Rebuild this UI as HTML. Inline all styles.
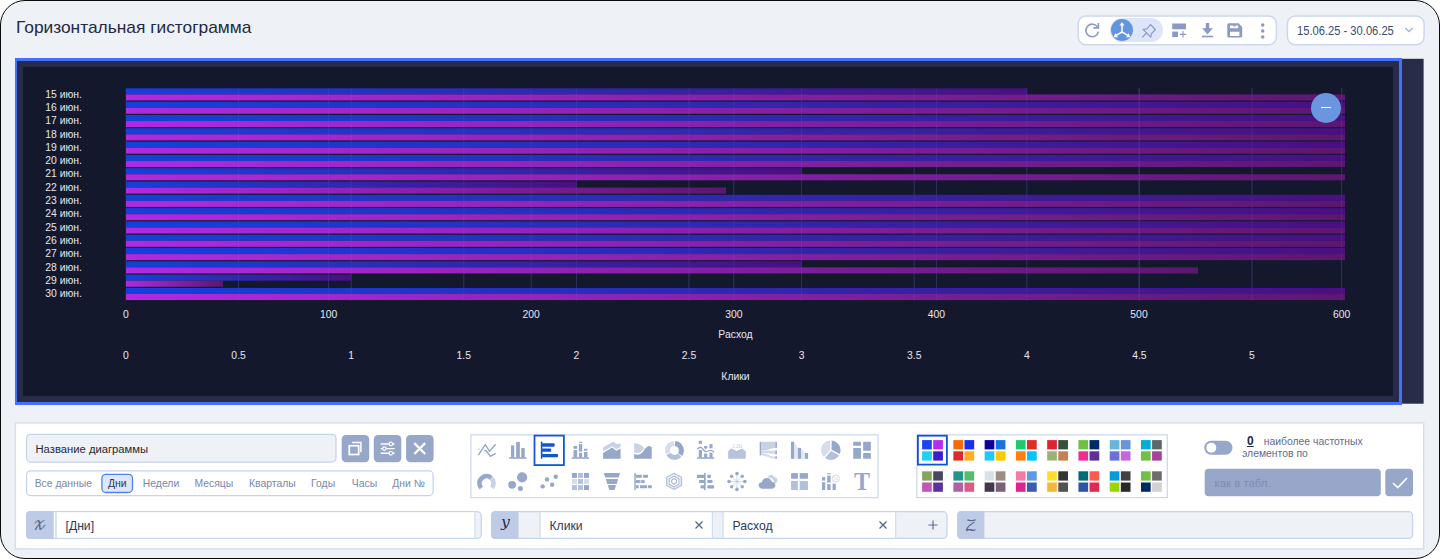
<!DOCTYPE html>
<html lang="ru">
<head>
<meta charset="utf-8">
<title>Горизонтальная гистограмма</title>
<style>
html,body{margin:0;padding:0;background:#fff;}
body{width:1440px;height:559px;position:relative;overflow:hidden;font-family:"Liberation Sans",Arial,sans-serif;color:#1f2a44;}
*{box-sizing:border-box;}
.abs,.frame,.ic,.pal i,.tg span{position:absolute;}
.frame{left:0;top:0;width:1440px;height:559px;background:#eef1f6;border:1px solid #0a0a0a;border-radius:25px;}
.title{left:16px;top:15px;font-size:17.35px;line-height:24px;color:#1f2a44;white-space:nowrap;}
.tbar{left:1077.5px;top:15.5px;width:199px;height:29px;background:#fff;border:1px solid #c6d3ec;border-radius:8px;}
.pill{left:1110px;top:18.3px;width:52.8px;height:24px;border-radius:12px;background:#dce6f8;}
.circ{left:1110.6px;top:18.9px;width:22.6px;height:22.6px;border-radius:50%;background:#6195e0;}
.date{left:1287px;top:15.5px;width:137px;height:29px;background:#fff;border:1px solid #c6d3ec;border-radius:8px;}
.datet{left:1296.5px;top:22px;font-size:12.5px;line-height:18px;color:#3b4a6b;white-space:nowrap;transform-origin:0 50%;transform:scaleX(0.893);}
.slate{left:15px;top:58px;width:1409px;height:346.5px;background:#292c49;}
.blue{left:15px;top:58px;width:1387px;height:347px;background:#292c49;border:solid #4670ff;border-width:3px 3px 3px 2.5px;}
.dark{left:23px;top:67px;width:1370px;height:329px;background:#14182d;}
svg.chart{position:absolute;left:23px;top:67px;font-family:"Liberation Sans",Arial,sans-serif;}
.minus{left:1311px;top:93px;width:30px;height:30px;border-radius:50%;background:#6a96e0;}
.minus:after{content:"";position:absolute;left:10px;top:14.3px;width:10px;height:1.2px;background:#fff;}
.panel{left:15px;top:422px;width:1409px;height:127px;background:#fff;border:1px solid #ccd8ee;}
.name{left:26px;top:434px;width:311px;height:29px;background:#eef1f6;border:1px solid #c6d3ec;border-radius:5px;}
.namet{left:35.5px;top:441px;font-size:11.25px;line-height:16px;color:#1f2937;white-space:nowrap;}
.btn{top:434.5px;width:28px;height:28px;border-radius:4px;background:#97a7c9;}
.tg{left:27px;top:472px;width:406px;height:24px;font-size:10.4px;color:#7a87aa;}
.tg span{top:0;line-height:24px;white-space:nowrap;}
.tg .sel{color:#2a3656;}
.box{background:#fff;border:1px solid #c6d3ec;}
.ic{overflow:visible;}
.selbox{border:2px solid #0d55d6;background:transparent;}
.pal i{width:9.6px;height:9.2px;display:block;}
.lab{top:511px;width:27.7px;height:28px;background:#becbe6;border-radius:4.5px 0 0 4.5px;text-align:center;}
.math{font-family:"DejaVu Math TeX Gyre","DejaVu Serif","Liberation Serif",serif;font-style:normal;}
.row{top:511px;height:28px;}
.ft{font-size:12.2px;line-height:16px;color:#2b3858;white-space:nowrap;}
</style>
</head>
<body>
<div class="frame"></div>
<div class="abs title">Горизонтальная гистограмма</div>

<!-- toolbar -->
<svg class="abs" style="left:1070px;top:10px" width="370" height="40" viewBox="1070 10 370 40"><rect x="1078.2" y="16" width="198.2" height="28.8" rx="8" fill="#fff" stroke="#ccd7ee" stroke-width="1.5"/><rect x="1287.4" y="16" width="136.7" height="28.8" rx="8" fill="#fff" stroke="#ccd7ee" stroke-width="1.5"/></svg>
<div class="abs pill"></div>
<div class="abs circ"></div>
<svg class="abs" style="left:1083px;top:21px" width="18" height="18" viewBox="0 0 18 18"><path d="M14.6 6.2 A6.3 6.3 0 1 0 15.4 10.6" fill="none" stroke="#8a9ac2" stroke-width="1.6"/><path d="M15.4 2 V6.9 H10.4" fill="none" stroke="#8a9ac2" stroke-width="1.6"/></svg>
<svg class="abs" style="left:1112px;top:20.5px" width="20" height="20" viewBox="0 0 20 20"><g stroke="#fff" stroke-width="1.5" fill="none"><path d="M10 11 V3.5 M10 11 L3.8 14.6 M10 11 L16.2 14.6"/></g><path d="M10 1.2 L12.6 4.6 H7.4Z M1.8 15.9 L3.3 11.9 L6 16.4Z M18.2 15.9 L16.7 11.9 L14 16.4Z" fill="#fff"/></svg>
<svg class="abs" style="left:1140px;top:21.5px" width="17" height="17" viewBox="0 0 17 17"><g fill="none" stroke="#8a9ac2" stroke-width="1.2" stroke-linejoin="round" stroke-linecap="round"><path d="M10.5 2.5 L15.3 7.5 L11.3 11.8 L10.8 15.1 L3.1 7.4 L7 6.9 Z"/><path d="M6.6 11 L2.5 15.1"/></g></svg>
<svg class="abs" style="left:1172px;top:23px" width="15" height="15" viewBox="0 0 15 15"><rect x="0.2" y="0.5" width="13.8" height="5.8" fill="#8a9ac2"/><rect x="0.2" y="8.6" width="5.8" height="5.5" fill="#8a9ac2"/><path d="M11 8.1 V14.5 M7.8 11.3 H14.2" stroke="#8a9ac2" stroke-width="1.15"/></svg>
<svg class="abs" style="left:1201px;top:23px" width="13" height="15" viewBox="0 0 13 15"><path d="M4.8 0 H8.2 V5.2 H11.8 L6.5 11.4 L1.2 5.2 H4.8Z" fill="#8a9ac2"/><rect x="0.9" y="12.7" width="11.2" height="1.6" fill="#8a9ac2"/></svg>
<svg class="abs" style="left:1227.2px;top:22.6px" width="16" height="15" viewBox="0 0 16 15"><path d="M1.8 0.3 H11.6 L15.2 3.9 V13 Q15.2 14.6 13.6 14.6 H1.8 Q0.3 14.6 0.3 13 V1.8 Q0.3 0.3 1.8 0.3Z M3 2.4 V5.2 H11.2 V2.4 H8.6 V3.6 H6.4 V2.4Z M3 8.8 V13 H12.4 V8.8Z" fill="#8a9ac2" fill-rule="evenodd"/></svg>
<svg class="abs" style="left:1260px;top:22.5px" width="5" height="16" viewBox="0 0 5 16"><circle cx="2.7" cy="1.9" r="1.75" fill="#8a9ac2"/><circle cx="2.7" cy="8" r="1.75" fill="#8a9ac2"/><circle cx="2.7" cy="14.1" r="1.75" fill="#8a9ac2"/></svg>

<div class="abs datet">15.06.25 - 30.06.25</div>
<svg class="abs" style="left:1404px;top:27px" width="10" height="6" viewBox="0 0 10 6"><path d="M1.2 1 L5 4.6 L8.8 1" fill="none" stroke="#a9b7d6" stroke-width="1.4"/></svg>

<!-- chart -->
<svg class="abs" style="left:1400px;top:56px" width="30" height="352" viewBox="1400 56 30 352"><rect x="1400" y="58.8" width="23.6" height="344.9" fill="#292c49"/></svg>
<div class="abs blue"></div>
<div class="abs dark"></div>
<svg class="chart" width="1370" height="329" viewBox="23 67 1370 329">
<defs><linearGradient id="gb" x1="0" x2="1" y1="0" y2="0"><stop offset="0" stop-color="#1440dc"/><stop offset="1" stop-color="#4a0f84"/></linearGradient><linearGradient id="gp" x1="0" x2="1" y1="0" y2="0"><stop offset="0" stop-color="#b02ae0"/><stop offset="1" stop-color="#5c1770"/></linearGradient></defs>
<g stroke="#242a4e" stroke-width="1">
<line x1="126" x2="126" y1="87.75" y2="300.66"/>
<line x1="238.6" x2="238.6" y1="87.75" y2="300.66"/>
<line x1="328.6" x2="328.6" y1="87.75" y2="300.66"/>
<line x1="351.2" x2="351.2" y1="87.75" y2="300.66"/>
<line x1="463.8" x2="463.8" y1="87.75" y2="300.66"/>
<line x1="531.2" x2="531.2" y1="87.75" y2="300.66"/>
<line x1="576.4" x2="576.4" y1="87.75" y2="300.66"/>
<line x1="689" x2="689" y1="87.75" y2="300.66"/>
<line x1="733.8" x2="733.8" y1="87.75" y2="300.66"/>
<line x1="801.6" x2="801.6" y1="87.75" y2="300.66"/>
<line x1="914.2" x2="914.2" y1="87.75" y2="300.66"/>
<line x1="936.4" x2="936.4" y1="87.75" y2="300.66"/>
<line x1="1026.8" x2="1026.8" y1="87.75" y2="300.66"/>
<line x1="1139" x2="1139" y1="87.75" y2="300.66"/>
<line x1="1139.4" x2="1139.4" y1="87.75" y2="300.66"/>
<line x1="1252" x2="1252" y1="87.75" y2="300.66"/>
<line x1="1341.6" x2="1341.6" y1="87.75" y2="300.66"/>
</g>
<rect x="126" y="88.35" width="900.8" height="6.05" fill="url(#gb)"/>
<rect x="126" y="94.4" width="1219" height="6.05" fill="url(#gp)"/>
<rect x="126" y="101.66" width="1219" height="6.05" fill="url(#gb)"/>
<rect x="126" y="107.71" width="1219" height="6.05" fill="url(#gp)"/>
<rect x="126" y="114.97" width="1219" height="6.05" fill="url(#gb)"/>
<rect x="126" y="121.02" width="1219" height="6.05" fill="url(#gp)"/>
<rect x="126" y="128.27" width="1219" height="6.05" fill="url(#gb)"/>
<rect x="126" y="134.32" width="1219" height="6.05" fill="url(#gp)"/>
<rect x="126" y="141.58" width="1219" height="6.05" fill="url(#gb)"/>
<rect x="126" y="147.63" width="1219" height="6.05" fill="url(#gp)"/>
<rect x="126" y="154.89" width="1219" height="6.05" fill="url(#gb)"/>
<rect x="126" y="160.94" width="1219" height="6.05" fill="url(#gp)"/>
<rect x="126" y="168.19" width="675.6" height="6.05" fill="url(#gb)"/>
<rect x="126" y="174.24" width="1219" height="6.05" fill="url(#gp)"/>
<rect x="126" y="181.5" width="450.4" height="6.05" fill="url(#gb)"/>
<rect x="126" y="187.55" width="600" height="6.05" fill="url(#gp)"/>
<rect x="126" y="194.81" width="1219" height="6.05" fill="url(#gb)"/>
<rect x="126" y="200.86" width="1219" height="6.05" fill="url(#gp)"/>
<rect x="126" y="208.12" width="1219" height="6.05" fill="url(#gb)"/>
<rect x="126" y="214.17" width="1219" height="6.05" fill="url(#gp)"/>
<rect x="126" y="221.42" width="1219" height="6.05" fill="url(#gb)"/>
<rect x="126" y="227.47" width="1219" height="6.05" fill="url(#gp)"/>
<rect x="126" y="234.73" width="1219" height="6.05" fill="url(#gb)"/>
<rect x="126" y="240.78" width="1219" height="6.05" fill="url(#gp)"/>
<rect x="126" y="248.04" width="1219" height="6.05" fill="url(#gb)"/>
<rect x="126" y="254.09" width="1219" height="6.05" fill="url(#gp)"/>
<rect x="126" y="261.34" width="675.6" height="6.05" fill="url(#gb)"/>
<rect x="126" y="267.39" width="1072" height="6.05" fill="url(#gp)"/>
<rect x="126" y="274.65" width="225.2" height="6.05" fill="url(#gb)"/>
<rect x="126" y="280.7" width="97" height="6.05" fill="url(#gp)"/>
<rect x="126" y="287.96" width="1219" height="6.05" fill="url(#gb)"/>
<rect x="126" y="294.01" width="1219" height="6.05" fill="url(#gp)"/>
<g stroke="#7f8cff" stroke-opacity="0.10" stroke-width="1">
<line x1="238.6" x2="238.6" y1="87.75" y2="300.66"/>
<line x1="328.6" x2="328.6" y1="87.75" y2="300.66"/>
<line x1="351.2" x2="351.2" y1="87.75" y2="300.66"/>
<line x1="463.8" x2="463.8" y1="87.75" y2="300.66"/>
<line x1="531.2" x2="531.2" y1="87.75" y2="300.66"/>
<line x1="576.4" x2="576.4" y1="87.75" y2="300.66"/>
<line x1="689" x2="689" y1="87.75" y2="300.66"/>
<line x1="733.8" x2="733.8" y1="87.75" y2="300.66"/>
<line x1="801.6" x2="801.6" y1="87.75" y2="300.66"/>
<line x1="914.2" x2="914.2" y1="87.75" y2="300.66"/>
<line x1="936.4" x2="936.4" y1="87.75" y2="300.66"/>
<line x1="1026.8" x2="1026.8" y1="87.75" y2="300.66"/>
<line x1="1139" x2="1139" y1="87.75" y2="300.66"/>
<line x1="1139.4" x2="1139.4" y1="87.75" y2="300.66"/>
<line x1="1252" x2="1252" y1="87.75" y2="300.66"/>
<line x1="1341.6" x2="1341.6" y1="87.75" y2="300.66"/>
</g>
<g fill="#e4e6ee" font-size="10.4" text-anchor="end">
<text x="82" y="97.65">15 июн.</text>
<text x="82" y="110.96">16 июн.</text>
<text x="82" y="124.27">17 июн.</text>
<text x="82" y="137.57">18 июн.</text>
<text x="82" y="150.88">19 июн.</text>
<text x="82" y="164.19">20 июн.</text>
<text x="82" y="177.49">21 июн.</text>
<text x="82" y="190.8">22 июн.</text>
<text x="82" y="204.11">23 июн.</text>
<text x="82" y="217.42">24 июн.</text>
<text x="82" y="230.72">25 июн.</text>
<text x="82" y="244.03">26 июн.</text>
<text x="82" y="257.34">27 июн.</text>
<text x="82" y="270.64">28 июн.</text>
<text x="82" y="283.95">29 июн.</text>
<text x="82" y="297.26">30 июн.</text>
</g>
<g fill="#e4e6ee" font-size="10.4" text-anchor="middle">
<text x="126" y="317.6">0</text>
<text x="328.6" y="317.6">100</text>
<text x="531.2" y="317.6">200</text>
<text x="733.8" y="317.6">300</text>
<text x="936.4" y="317.6">400</text>
<text x="1139" y="317.6">500</text>
<text x="1341.6" y="317.6">600</text>
<text x="735.5" y="338.4">Расход</text>
<text x="126" y="359">0</text>
<text x="238.6" y="359">0.5</text>
<text x="351.2" y="359">1</text>
<text x="463.8" y="359">1.5</text>
<text x="576.4" y="359">2</text>
<text x="689" y="359">2.5</text>
<text x="801.6" y="359">3</text>
<text x="914.2" y="359">3.5</text>
<text x="1026.8" y="359">4</text>
<text x="1139.4" y="359">4.5</text>
<text x="1252" y="359">5</text>
<text x="735.5" y="380">Клики</text>
</g>
</svg>
<div class="abs minus"></div>

<!-- bottom panel -->
<svg class="abs" style="left:0;top:410px" width="1440" height="149" viewBox="0 410 1440 149">
<rect x="15.35" y="422.95" width="1408.3" height="126" fill="#fff" stroke="#d5ddef" stroke-width="1.5"/>
<rect x="26.5" y="434.3" width="309.5" height="27.8" rx="4" fill="#eef1f6" stroke="#c6d3ec" stroke-width="1.25"/>
<rect x="341.7" y="434.9" width="27.5" height="27.4" rx="4.3" fill="#97a7c9"/>
<rect x="373.8" y="434.9" width="27.5" height="27.4" rx="4.3" fill="#97a7c9"/>
<rect x="406.1" y="434.9" width="27.5" height="27.4" rx="4.3" fill="#97a7c9"/>
<rect x="26.6" y="470.9" width="406.5" height="24.6" rx="4" fill="#fff" stroke="#c6d3ec" stroke-width="1.25"/>
<rect x="101.9" y="474.4" width="30.6" height="18.1" rx="4" fill="#dee7f9" stroke="#4f83e8" stroke-width="1.3"/>
<rect x="470.9" y="434.8" width="407.1" height="62.8" fill="#fff" stroke="#ccd7ee" stroke-width="1.25"/>
<rect x="534.5" y="435.6" width="29.4" height="29.5" fill="none" stroke="#1259d6" stroke-width="1.8"/>
<rect x="916.9" y="434.8" width="250.4" height="62.8" fill="#fff" stroke="#ccd7ee" stroke-width="1.25"/>
<rect x="917.9" y="435.7" width="29" height="28.9" fill="none" stroke="#0d55d6" stroke-width="1.8"/>
<rect x="1204.2" y="440.8" width="28.3" height="13.9" rx="6.95" fill="#97a7c9"/><circle cx="1211.3" cy="447.75" r="5" fill="#fff"/>
<rect x="1204.7" y="468.7" width="176.1" height="27.6" rx="4" fill="#97a7c9"/><rect x="1385.3" y="468.7" width="27.7" height="27.6" rx="4" fill="#97a7c9"/>
<rect x="26.6" y="511.7" width="454.6" height="26.7" rx="4" fill="#eef1f6" stroke="#c6d3ec" stroke-width="1.25"/>
<rect x="53.7" y="512.3" width="421.9" height="25.4" fill="#fff"/><rect x="55" y="512.3" width="2" height="25.4" fill="#d9e1f2"/><rect x="474.2" y="512.3" width="1.4" height="25.4" fill="#d5def0"/>
<path d="M30 511.1 H53.7 V539.0 H30 Q26 539.0 26 535.0 V515.1 Q26 511.1 30 511.1Z" fill="#becbe6"/>
<rect x="491.7" y="511.7" width="455.3" height="26.7" rx="4" fill="#eef1f6" stroke="#c6d3ec" stroke-width="1.25"/>
<rect x="539.5" y="512.3" width="173.3" height="25.4" fill="#cbd6ed"/><rect x="540.6" y="512.3" width="171.2" height="25.4" fill="#fff"/>
<rect x="722.5" y="512.3" width="173.7" height="25.4" fill="#cbd6ed"/><rect x="723.6" y="512.3" width="171.6" height="25.4" fill="#fff"/>
<path d="M495.1 511.1 H518.5 V539.0 H495.1 Q491.1 539.0 491.1 535.0 V515.1 Q491.1 511.1 495.1 511.1Z" fill="#becbe6"/>
<rect x="957.8" y="511.7" width="454.8" height="26.7" rx="4" fill="#eef1f6" stroke="#c6d3ec" stroke-width="1.25"/>
<path d="M961.2 511.1 H984.4 V539.0 H961.2 Q957.2 539.0 957.2 535.0 V515.1 Q957.2 511.1 961.2 511.1Z" fill="#becbe6"/>
</svg>
<div class="abs namet">Название диаграммы</div>

<svg class="abs" style="left:340px;top:432px" width="96" height="32" viewBox="340 432 96 32"><g fill="none" stroke="#fff"><rect x="349.25" y="445.75" width="9.4" height="8.75" stroke-width="1.7"/><path d="M352.2 442.55 H360.9 V452.2" stroke-width="1.5"/><path d="M380.7 443.9 H388.9 M392.7 443.9 H394.6 M380.7 448.6 H382.5 M386.3 448.6 H394.6 M380.7 453.3 H388.9 M392.7 453.3 H394.6" stroke-width="1.45"/><circle cx="390.8" cy="443.9" r="1.8" stroke-width="1.2"/><circle cx="384.4" cy="448.6" r="1.8" stroke-width="1.2"/><circle cx="390.8" cy="453.3" r="1.8" stroke-width="1.2"/><path d="M414.3 443.1 L425.2 454 M425.2 443.1 L414.3 454" stroke-width="2.2"/></g></svg>
<div class="abs tg">
<span style="left:7.7px">Все данные</span>
<span class="sel" style="left:74.6px;width:31.4px;text-align:center">Дни</span>
<span style="left:115.8px">Недели</span>
<span style="left:167.4px">Месяцы</span>
<span style="left:222px">Кварталы</span>
<span style="left:284.1px">Годы</span>
<span style="left:324.8px">Часы</span>
<span style="left:365.2px">Дни №</span>
</div>

<!-- chart type icons -->
<svg class="abs" style="left:470px;top:434px" width="410" height="65" viewBox="470 434 410 65">
<g transform="translate(478,441.1)"><g fill="none" stroke="#97a7c9" stroke-width="1.4" stroke-linejoin="round"><path d="M0.3 14 L7.3 3.5 L11.6 10.2 L17.7 3.2"/><path d="M6.2 9.1 L8.3 9.9 L12.4 15.3 L17.7 12.3"/></g><circle cx="1.1" cy="8.1" r="0.6" fill="#97a7c9"/></g>
<g transform="translate(509.27,441.1)"><rect x="1.75" y="4.3" width="3.25" height="12.3" fill="#97a7c9"/><rect x="6.85" y="0.8" width="3.75" height="15.8" fill="#97a7c9"/><rect x="11.95" y="7" width="3.5" height="9.6" fill="#97a7c9"/><rect x="-0.1" y="16.1" width="17.4" height="1.6" fill="#97a7c9"/></g>
<g transform="translate(540.54,441.1)"><rect x="0.3" y="0.5" width="1.6" height="17.2" rx="0.6" fill="#0d55d6"/><rect x="1.5" y="2.25" width="12.6" height="3.3" rx="0.8" fill="#0d55d6"/><rect x="1.5" y="7.5" width="9.1" height="3.2" rx="0.8" fill="#0d55d6"/><rect x="1.5" y="12.85" width="16" height="3.2" rx="0.8" fill="#0d55d6"/></g>
<g transform="translate(571.81,441.1)"><rect x="1.7" y="4.9" width="3.6" height="2.8" fill="#97a7c9"/><rect x="1.7" y="8.95" width="3.6" height="7.6" fill="#97a7c9"/><rect x="7.05" y="0.65" width="3.3" height="1.15" fill="#97a7c9"/><rect x="7.05" y="3" width="3.3" height="7.5" fill="#97a7c9"/><rect x="7.05" y="11.8" width="3.3" height="4.7" fill="#97a7c9"/><rect x="12.2" y="7.7" width="3.4" height="1.9" fill="#97a7c9"/><rect x="12.2" y="10.8" width="3.4" height="5.7" fill="#97a7c9"/><rect x="0" y="16.15" width="17.2" height="1.55" fill="#97a7c9"/></g>
<g transform="translate(603.08,441.1)"><path d="M0 10.4 V6.46 L10.3 0.5 L13.4 3 L17.5 2.4 V6 L13.1 8.2 L9.05 5.1Z" fill="#c9d2e5"/><path d="M0 17.7 V11.8 L9.05 6.46 L13.1 9.6 L17.5 7.4 V17.7Z" fill="#97a7c9"/></g>
<g transform="translate(634.35,441.1)"><path d="M-0.2 2.1 C4 2.2 8 4.2 9.8 7.1 C7.6 11 4 12.8 -0.2 11.5Z" fill="#c9d2e5"/><path d="M-0.2 13 C4 14.8 7.2 13.2 10 8.6 C12 5.6 14 4.6 15.1 4.9 L17.4 6.15 V17.7 H-0.2Z" fill="#97a7c9"/></g>
<g transform="translate(665.62,441.1)"><path d="M9.48 -0.10 A9.40 9.40 0 0 1 16.42 14.81 L12.46 11.93 A4.50 4.50 0 0 0 9.13 4.79 Z" fill="#97a7c9"/><path d="M15.69 15.69 A9.40 9.40 0 0 1 0.68 13.98 L4.92 11.53 A4.50 4.50 0 0 0 12.11 12.35 Z" fill="#b3c0da"/><path d="M0.17 12.95 A9.40 9.40 0 0 1 8.16 -0.10 L8.51 4.79 A4.50 4.50 0 0 0 4.68 11.04 Z" fill="#d5dcea"/></g>
<g transform="translate(696.89,441.1)"><path d="M1.9 -0.4 H5.05 V3.5 L3.5 2.5 L1.9 3.5Z" fill="#97a7c9"/><rect x="1.9" y="8.9" width="3.15" height="7.6" fill="#97a7c9"/><path d="M7.2 4.9 H10.4 V6.6 L8.8 8.4 L7.2 6.6Z" fill="#97a7c9"/><rect x="7.2" y="12.4" width="3.15" height="4.1" fill="#97a7c9"/><rect x="12.55" y="3" width="3.1" height="4.1" fill="#97a7c9"/><rect x="12.55" y="11.5" width="3.1" height="5" fill="#97a7c9"/><path d="M0.36 8.3 C1.5 7 2.5 6.1 3.5 6.15 C5.5 6.3 7 10.3 8.8 10.5 C10.5 10.7 12.3 9 14.1 9.3 C15.3 9.5 16.3 10.3 17.2 11.15" fill="none" stroke="#fff" stroke-width="2.9"/><path d="M0.36 8.3 C1.5 7 2.5 6.1 3.5 6.15 C5.5 6.3 7 10.3 8.8 10.5 C10.5 10.7 12.3 9 14.1 9.3 C15.3 9.5 16.3 10.3 17.2 11.15" fill="none" stroke="#97a7c9" stroke-width="1.3"/><rect x="0.05" y="16.15" width="17.2" height="1.55" fill="#97a7c9"/></g>
<g transform="translate(728.16,441.1)"><path d="M0 17.7 V10.84 L2.78 7.7 L8.4 10.2 L14.34 8 L17.6 10.84 V17.7Z" fill="#b7c3dd"/><path d="M0 10.84 L2.78 7.7 L8.4 10.2 L14.34 8 L17.6 10.84" fill="none" stroke="#a9b7d5" stroke-width="0.7"/><text x="9" y="6.6" font-size="6.8" text-anchor="middle" fill="#c3cde2" font-family="Liberation Serif,serif">120</text></g>
<g transform="translate(759.43,441.1)"><path d="M1.4 0.65 H16 V6.8 C11 6.8 9 9.5 1.4 9.5Z" fill="#c9d2e5"/><path d="M1.4 9.5 C7 9.5 10 9.6 16 9.6 V12.9 C11 12.9 8 12 1.4 12Z" fill="#d3daea"/><path d="M1.4 12 C8 12 10 15.4 16 15.4 V17.5 C10 17.5 8 14.3 1.4 14.3Z" fill="#d3daea"/><rect x="0.26" y="0.65" width="1.3" height="13.65" fill="#97a7c9"/><rect x="15.9" y="0.65" width="1.55" height="6.15" fill="#97a7c9"/><rect x="15.9" y="9.3" width="1.55" height="4" fill="#97a7c9"/><rect x="15.9" y="15.2" width="1.55" height="2.5" fill="#97a7c9"/></g>
<g transform="translate(790.7,441.1)"><path d="M3.36 0.65 L7.24 6.78 V17.7 H3.36Z M10.36 6.78 L14.3 11.9 V17.7 H10.36Z" fill="#e2e7f1"/><rect x="0.24" y="0.65" width="3.12" height="17.05" fill="#97a7c9"/><rect x="7.24" y="6.78" width="3.12" height="10.92" fill="#97a7c9"/><rect x="14.3" y="11.9" width="3.1" height="5.8" fill="#97a7c9"/></g>
<g transform="translate(821.97,441.1)"><path d="M9.54 8.69 L9.70 -0.56 A9.70 9.70 0 0 1 17.78 12.89 Z" fill="#97a7c9"/><path d="M9.00 9.89 L17.16 14.10 A9.70 9.70 0 0 1 3.01 16.85 Z" fill="#b3c0da"/><path d="M8.10 8.82 L1.99 15.96 A9.70 9.70 0 0 1 8.17 -0.58 Z" fill="#d5dcea"/></g>
<g transform="translate(853.24,441.1)"><rect x="0" y="0.7" width="7.75" height="4" rx="0.5" fill="#97a7c9"/><rect x="0" y="7" width="7.75" height="10.7" rx="0.5" fill="#97a7c9"/><rect x="9.9" y="0.7" width="7.75" height="8.95" rx="0.5" fill="#97a7c9"/><rect x="9.9" y="12" width="7.75" height="5.7" rx="0.5" fill="#97a7c9"/></g>
<g transform="translate(478,472.5)"><path d="M1.51 17.04 A9.40 9.40 0 0 1 14.67 3.66 L11.58 7.20 A4.70 4.70 0 0 0 5.01 13.89 Z" fill="#97a7c9"/><path d="M14.67 3.66 A9.40 9.40 0 0 1 15.81 16.67 L12.15 13.71 A4.70 4.70 0 0 0 11.58 7.20 Z" fill="#c9d2e5"/></g>
<g transform="translate(509.27,472.5)"><circle cx="12.86" cy="4.8" r="5.1" fill="#97a7c9"/><circle cx="2.86" cy="12.3" r="3.9" fill="#97a7c9"/><circle cx="11.17" cy="16.06" r="2.5" fill="#97a7c9"/></g>
<g transform="translate(540.54,472.5)"><circle cx="15.2" cy="4.2" r="2.2" fill="#97a7c9"/><circle cx="6.46" cy="6.9" r="2.2" fill="#97a7c9"/><circle cx="11.6" cy="12.2" r="2.2" fill="#97a7c9"/><circle cx="2.1" cy="13.9" r="2.2" fill="#97a7c9"/></g>
<g transform="translate(571.81,472.5)"><rect x="0.13" y="0.44" width="5" height="4.95" fill="#97a7c9"/><rect x="6.2" y="0.44" width="5" height="4.95" fill="#b3c0da"/><rect x="12.2" y="0.44" width="5" height="4.95" fill="#97a7c9"/><rect x="0.13" y="6.45" width="5" height="4.95" fill="#d5dcea"/><rect x="6.2" y="6.45" width="5" height="4.95" fill="#b3c0da"/><rect x="12.2" y="6.45" width="5" height="4.95" fill="#d5dcea"/><rect x="0.13" y="12.6" width="5" height="4.95" fill="#b3c0da"/><rect x="6.2" y="12.6" width="5" height="4.95" fill="#b3c0da"/><rect x="12.2" y="12.6" width="5" height="4.95" fill="#97a7c9"/></g>
<g transform="translate(603.08,472.5)"><path d="M1 0.44 H16.5 Q17 0.44 16.8 1 L15.7 4.6 Q15.5 5.1 15 5.1 H2.8 Q2.3 5.1 2.1 4.6 L0.7 1 Q0.5 0.44 1 0.44Z" fill="#97a7c9"/><path d="M3.2 6.5 H14.6 Q15.1 6.5 14.9 7 L13.8 10.9 Q13.6 11.4 13.2 11.4 H4.6 Q4.1 11.4 4 10.9 L2.9 7 Q2.7 6.5 3.2 6.5Z" fill="#97a7c9"/><path d="M5 12.6 H12.5 Q13 12.6 12.8 13.1 L11.8 16.8 Q11.5 17.5 10.9 17.5 H6.9 Q6.3 17.5 6 16.8 L4.8 13.1 Q4.6 12.6 5 12.6Z" fill="#97a7c9"/></g>
<g transform="translate(634.35,472.5)"><rect x="-0.04" y="0.44" width="1.45" height="17.2" rx="0.5" fill="#97a7c9"/><rect x="1.4" y="2.3" width="6.05" height="2.95" fill="#97a7c9"/><rect x="8.7" y="2.3" width="5" height="2.95" fill="#97a7c9"/><rect x="1.4" y="7.6" width="4.2" height="2.95" fill="#97a7c9"/><rect x="5.6" y="7.6" width="1.25" height="2.95" fill="#c9d2e5"/><rect x="6.85" y="7.6" width="3.45" height="2.95" fill="#97a7c9"/><rect x="1.4" y="12.75" width="2.95" height="3" fill="#97a7c9"/><rect x="5.6" y="12.75" width="7.2" height="3" fill="#97a7c9"/><rect x="13.7" y="12.75" width="3.75" height="3" fill="#97a7c9"/></g>
<g transform="translate(665.62,472.5)"><g fill="none" stroke-linejoin="round"><path d="M8.45 0.90 L15.75 4.90 L15.75 12.90 L8.45 16.90 L1.15 12.90 L1.15 4.90Z" stroke="#b9c5de" stroke-width="1.6"/><path d="M8.45 3.40 L13.35 6.15 L13.35 11.65 L8.45 14.40 L3.55 11.65 L3.55 6.15Z" stroke="#a6b4d3" stroke-width="1.1"/><path d="M8.45 6.10 L10.85 7.50 L10.85 10.30 L8.45 11.70 L6.05 10.30 L6.05 7.50Z" stroke="#a6b4d3" stroke-width="1.1"/></g></g>
<g transform="translate(696.89,472.5)"><rect x="7.1" y="0.44" width="1.7" height="17.2" rx="0.6" fill="#97a7c9"/><rect x="0.05" y="2.3" width="7.5" height="3.1" rx="0.6" fill="#97a7c9"/><rect x="2.1" y="7.6" width="5.5" height="3" rx="0.6" fill="#97a7c9"/><rect x="3.6" y="12.8" width="4" height="3.1" rx="0.6" fill="#97a7c9"/><rect x="10.36" y="2.3" width="3.65" height="3.1" rx="0.6" fill="#97a7c9"/><rect x="10.36" y="7.6" width="5.3" height="3" rx="0.6" fill="#97a7c9"/><rect x="10.36" y="12.8" width="6.9" height="3.1" rx="0.6" fill="#97a7c9"/></g>
<g transform="translate(728.16,472.5)"><g stroke="#b3c0da" stroke-width="0.65"><path d="M8.78 9.00 L8.78 1.10"/><path d="M8.78 9.00 L16.68 9.00"/><path d="M8.78 9.00 L8.78 16.90"/><path d="M8.78 9.00 L0.88 9.00"/><path d="M8.78 9.00 L14.08 3.70"/><path d="M8.78 9.00 L14.08 14.30"/><path d="M8.78 9.00 L3.48 14.30"/><path d="M8.78 9.00 L3.48 3.70"/></g><g fill="#97a7c9"><circle cx="8.78" cy="1.10" r="1.80"/><circle cx="16.68" cy="9.00" r="1.80"/><circle cx="8.78" cy="16.90" r="1.80"/><circle cx="0.88" cy="9.00" r="1.80"/><circle cx="14.08" cy="3.70" r="1.70"/><circle cx="14.08" cy="14.30" r="1.70"/><circle cx="3.48" cy="14.30" r="1.70"/><circle cx="3.48" cy="3.70" r="1.70"/></g></g>
<g transform="translate(759.43,472.5)"><path d="M8.2 5.2 C9.5 1.6 13.6 1.4 14.6 4.4 C17.6 4.2 19 7.6 17 10.6 L14.8 11.2 C15 7.6 12 4.6 8.2 5.2Z" fill="#c9d2e5"/><path d="M3.4 16.2 C-2.2 16.2 -2 9.6 2.6 9.7 C3 4.2 11.6 4.2 12.2 9.2 C17 9.2 17.2 16.2 12.6 16.2Z" fill="#97a7c9"/></g>
<g transform="translate(790.7,472.5)"><rect x="0.38" y="0.64" width="6.8" height="5.6" fill="#97a7c9"/><rect x="8.95" y="0.64" width="8.3" height="5.6" fill="#97a7c9"/><rect x="0.38" y="8.5" width="6.8" height="9" fill="#b3c0da"/><rect x="8.95" y="8.5" width="8.3" height="9" fill="#b3c0da"/></g>
<g transform="translate(821.97,472.5)"><rect x="0.07" y="4.6" width="3.16" height="3.45" fill="#97a7c9"/><rect x="0.07" y="9.67" width="3.16" height="7.85" fill="#97a7c9"/><rect x="5.22" y="0.64" width="3.43" height="1.1" fill="#97a7c9"/><rect x="5.22" y="3.08" width="3.43" height="6.95" fill="#97a7c9"/><rect x="5.22" y="11.65" width="3.43" height="5.85" fill="#97a7c9"/><rect x="10.63" y="11.2" width="3.17" height="6.3" fill="#97a7c9"/><circle cx="13.8" cy="6.06" r="3.6" fill="#fff" stroke="#c9d2e5" stroke-width="0.8"/><path d="M11.9 8 L15.7 4.1" stroke="#c9d2e5" stroke-width="0.7"/><circle cx="12.4" cy="4.8" r="0.8" fill="#c9d2e5"/><circle cx="15.2" cy="7.3" r="0.8" fill="#c9d2e5"/></g>
<g transform="translate(853.24,472.5)"><text transform="translate(8.7,17.05) scale(1,1.07)" x="0" y="0" font-size="24" font-weight="bold" text-anchor="middle" fill="#97a7c9" font-family="Liberation Serif,serif">T</text></g>
</svg>

<!-- palettes -->
<svg class="abs" style="left:916px;top:434px" width="253" height="64" viewBox="0 0 253 64"><rect x="6.1" y="6.1" width="9.7" height="9.3" fill="#1a44f0"/><rect x="17.2" y="6.1" width="9.7" height="9.3" fill="#b82af0"/><rect x="6.1" y="17.3" width="9.7" height="9.3" fill="#1fcff5"/><rect x="17.2" y="17.3" width="9.7" height="9.3" fill="#3f1ad6"/><rect x="37.37" y="6.1" width="9.7" height="9.3" fill="#f96a04"/><rect x="48.47" y="6.1" width="9.7" height="9.3" fill="#1c2eea"/><rect x="37.37" y="17.3" width="9.7" height="9.3" fill="#dd2a2a"/><rect x="48.47" y="17.3" width="9.7" height="9.3" fill="#ffae1f"/><rect x="68.64" y="6.1" width="9.7" height="9.3" fill="#0e009e"/><rect x="79.74" y="6.1" width="9.7" height="9.3" fill="#1673e0"/><rect x="68.64" y="17.3" width="9.7" height="9.3" fill="#1fc8ff"/><rect x="79.74" y="17.3" width="9.7" height="9.3" fill="#ffc700"/><rect x="99.91" y="6.1" width="9.7" height="9.3" fill="#1fc970"/><rect x="111.01" y="6.1" width="9.7" height="9.3" fill="#e02d22"/><rect x="99.91" y="17.3" width="9.7" height="9.3" fill="#ff7f0e"/><rect x="111.01" y="17.3" width="9.7" height="9.3" fill="#00c5ff"/><rect x="131.18" y="6.1" width="9.7" height="9.3" fill="#e0242e"/><rect x="142.28" y="6.1" width="9.7" height="9.3" fill="#35533b"/><rect x="131.18" y="17.3" width="9.7" height="9.3" fill="#98b276"/><rect x="142.28" y="17.3" width="9.7" height="9.3" fill="#c38154"/><rect x="162.45" y="6.1" width="9.7" height="9.3" fill="#6ec146"/><rect x="173.55" y="6.1" width="9.7" height="9.3" fill="#002a66"/><rect x="162.45" y="17.3" width="9.7" height="9.3" fill="#ec2e92"/><rect x="173.55" y="17.3" width="9.7" height="9.3" fill="#5d2f9c"/><rect x="193.72" y="6.1" width="9.7" height="9.3" fill="#68b5dc"/><rect x="204.82" y="6.1" width="9.7" height="9.3" fill="#6a93dc"/><rect x="193.72" y="17.3" width="9.7" height="9.3" fill="#6a70dc"/><rect x="204.82" y="17.3" width="9.7" height="9.3" fill="#c466dc"/><rect x="224.99" y="6.1" width="9.7" height="9.3" fill="#00aed6"/><rect x="236.09" y="6.1" width="9.7" height="9.3" fill="#5c686c"/><rect x="224.99" y="17.3" width="9.7" height="9.3" fill="#6ec146"/><rect x="236.09" y="17.3" width="9.7" height="9.3" fill="#a8409c"/><rect x="6.1" y="37.3" width="9.7" height="9.3" fill="#84a55c"/><rect x="17.2" y="37.3" width="9.7" height="9.3" fill="#454860"/><rect x="6.1" y="48.5" width="9.7" height="9.3" fill="#c456b8"/><rect x="17.2" y="48.5" width="9.7" height="9.3" fill="#5d329c"/><rect x="37.37" y="37.3" width="9.7" height="9.3" fill="#20968a"/><rect x="48.47" y="37.3" width="9.7" height="9.3" fill="#56bc6c"/><rect x="37.37" y="48.5" width="9.7" height="9.3" fill="#ae62a4"/><rect x="48.47" y="48.5" width="9.7" height="9.3" fill="#d85c84"/><rect x="68.64" y="37.3" width="9.7" height="9.3" fill="#d8e0e8"/><rect x="79.74" y="37.3" width="9.7" height="9.3" fill="#9c8c82"/><rect x="68.64" y="48.5" width="9.7" height="9.3" fill="#44384e"/><rect x="79.74" y="48.5" width="9.7" height="9.3" fill="#7c5e7a"/><rect x="99.91" y="37.3" width="9.7" height="9.3" fill="#f47ca4"/><rect x="111.01" y="37.3" width="9.7" height="9.3" fill="#5c9ae2"/><rect x="99.91" y="48.5" width="9.7" height="9.3" fill="#dc2490"/><rect x="111.01" y="48.5" width="9.7" height="9.3" fill="#3c5cb4"/><rect x="131.18" y="37.3" width="9.7" height="9.3" fill="#ffdc2e"/><rect x="142.28" y="37.3" width="9.7" height="9.3" fill="#343434"/><rect x="131.18" y="48.5" width="9.7" height="9.3" fill="#f6b440"/><rect x="142.28" y="48.5" width="9.7" height="9.3" fill="#525252"/><rect x="162.45" y="37.3" width="9.7" height="9.3" fill="#006c7a"/><rect x="173.55" y="37.3" width="9.7" height="9.3" fill="#fc584c"/><rect x="162.45" y="48.5" width="9.7" height="9.3" fill="#2c56a4"/><rect x="173.55" y="48.5" width="9.7" height="9.3" fill="#e02a52"/><rect x="193.72" y="37.3" width="9.7" height="9.3" fill="#009cdc"/><rect x="204.82" y="37.3" width="9.7" height="9.3" fill="#424242"/><rect x="193.72" y="48.5" width="9.7" height="9.3" fill="#9cd600"/><rect x="204.82" y="48.5" width="9.7" height="9.3" fill="#282828"/><rect x="224.99" y="37.3" width="9.7" height="9.3" fill="#6ec146"/><rect x="236.09" y="37.3" width="9.7" height="9.3" fill="#6e6e6e"/><rect x="224.99" y="48.5" width="9.7" height="9.3" fill="#002a66"/><rect x="236.09" y="48.5" width="9.7" height="9.3" fill="#d2d2d2"/></svg>

<!-- right block -->
<div class="abs" style="left:1242px;top:436.2px;width:150px;font-size:10.4px;line-height:11.7px;color:#5f6b8f"><b style="font-size:12px;color:#1f2a44;text-decoration:underline;margin:0 10px 0 5px">0</b>наиболее частотных элементов по</div>
<div class="abs" style="left:1214.5px;top:475px;font-size:11.4px;line-height:16px;color:#7c8cb6;white-space:nowrap">как в табл.</div>
<svg class="abs" style="left:1391.5px;top:477px" width="16" height="12" viewBox="0 0 16 12"><path d="M1 6 L5.8 10.6 L15 1" fill="none" stroke="#fff" stroke-width="1.7"/></svg>

<!-- x row -->
<div class="abs math" style="left:26px;top:509.6px;width:27.7px;text-align:center;font-size:19px;line-height:30px;color:#5a6892;transform:scaleX(.84)">𝓍</div>
<div class="abs ft" style="left:65.5px;top:517.7px">[Дни]</div>

<!-- y row -->
<div class="abs math" style="left:491.3px;top:507.6px;width:27.7px;text-align:center;font-size:15.5px;line-height:30px;color:#1f2a4a">𝑦</div>
<div class="abs ft" style="left:549.5px;top:517.7px">Клики</div>
<svg class="abs" style="left:695px;top:521px" width="8" height="8" viewBox="0 0 8 8"><path d="M0.5 0.5 L7.5 7.5 M7.5 0.5 L0.5 7.5" stroke="#55638f" stroke-width="1.25"/></svg>
<div class="abs ft" style="left:732.5px;top:517.7px">Расход</div>
<svg class="abs" style="left:878.5px;top:521px" width="8" height="8" viewBox="0 0 8 8"><path d="M0.5 0.5 L7.5 7.5 M7.5 0.5 L0.5 7.5" stroke="#55638f" stroke-width="1.25"/></svg>
<svg class="abs" style="left:928px;top:520px" width="10" height="10" viewBox="0 0 10 10"><path d="M5 0.5 V9.5 M0.5 5 H9.5" stroke="#5a6892" stroke-width="1.15"/></svg>

<!-- z row -->
<div class="abs math" style="left:956.8px;top:509.6px;width:27.7px;text-align:center;font-size:20.5px;line-height:30px;color:#5a6892;transform:scaleX(.95)">𝓏</div>
</body>
</html>
